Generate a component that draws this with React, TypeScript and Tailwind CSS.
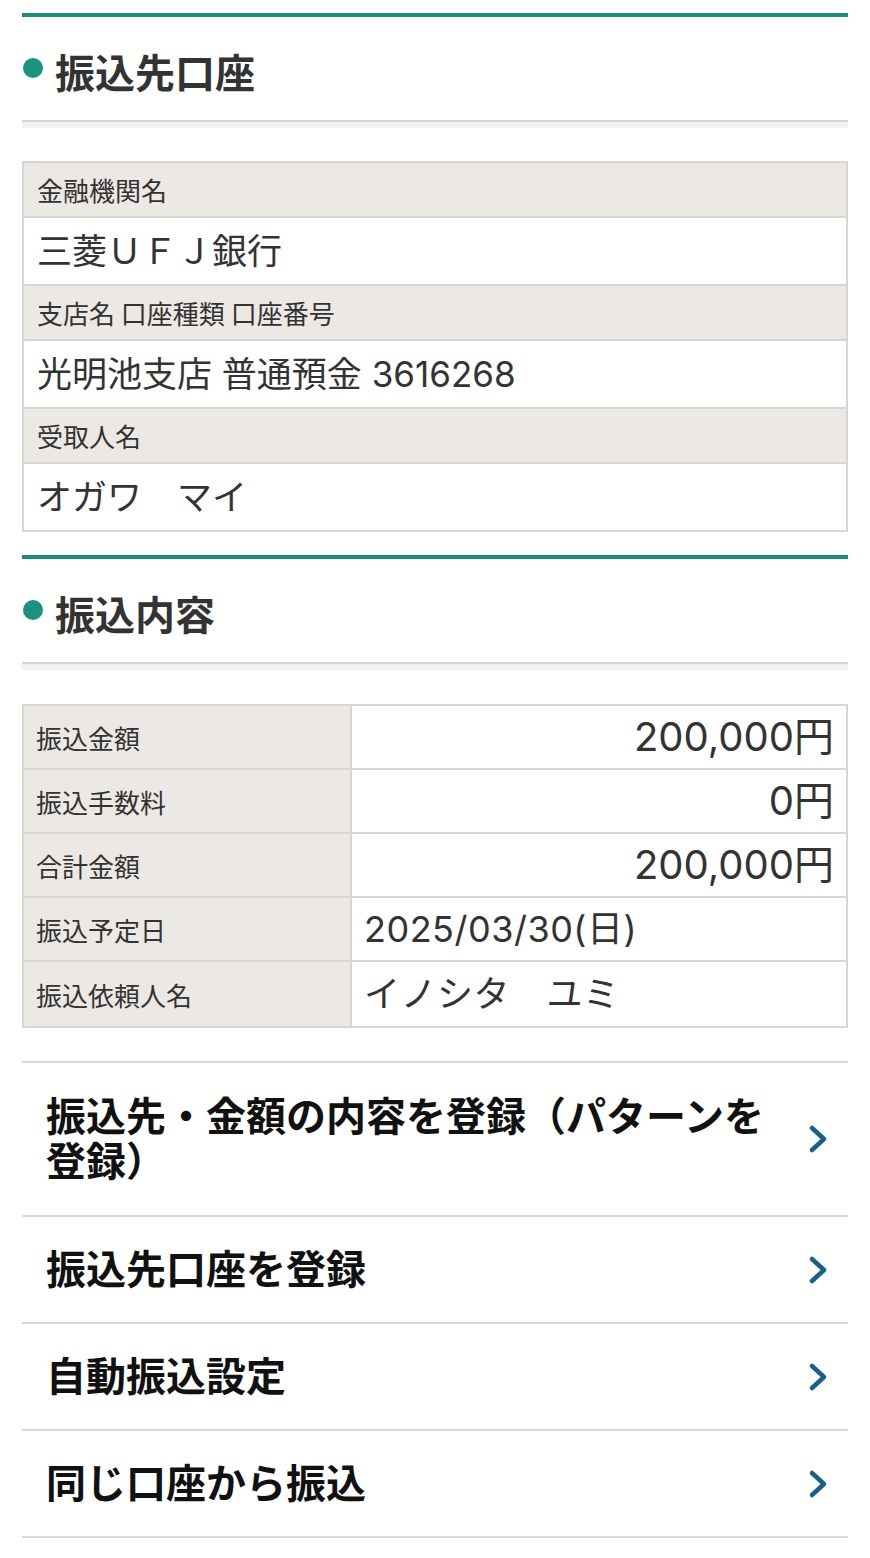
import type { ReactNode } from 'react'

function SectionHeader({ title }: { title: string }) {
  return (
    <div>
      <div className="h-1 bg-[#1b8c78]" />
      <div className="flex h-[103px] items-start pt-[33px]">
        <span className="ml-px mt-[8px] h-5 w-5 shrink-0 rounded-full bg-[#1a927d]" />
        <h2 className="ml-3 text-[40px] font-bold leading-[48px] text-[#333]">{title}</h2>
      </div>
      <div className="h-2 border-t-2 border-[#d4d4d4] bg-[#f2f2f2]" />
    </div>
  )
}

function Chevron() {
  return (
    <svg width="20" height="30" viewBox="0 0 20 30" fill="none" className="shrink-0">
      <path
        d="M4 4 L16 15 L4 26"
        stroke="#1b5f88"
        strokeWidth="4.5"
        strokeLinecap="round"
        strokeLinejoin="round"
      />
    </svg>
  )
}

function MenuItem({ children, tall }: { children: ReactNode; tall?: boolean }) {
  return (
    <a
      className={
        tall
          ? 'flex items-center gap-6 border-t-2 border-[#d9d9d9] py-[31px] pl-6 pr-[20px]'
          : 'flex items-center gap-6 border-t-2 border-[#d9d9d9] py-[30px] pl-6 pr-[20px]'
      }
    >
      <span className="flex-1 text-[40px] font-bold leading-[45px] text-[#111]">{children}</span>
      <Chevron />
    </a>
  )
}

const accountRows = [
  { label: '金融機関名', value: '三菱ＵＦＪ銀行' },
  { label: '支店名 口座種類 口座番号', value: '光明池支店 普通預金 3616268' },
  { label: '受取人名', value: 'オガワ　マイ' },
]

const detailRows: { label: string; value: string; right?: boolean }[] = [
  { label: '振込金額', value: '200,000円', right: true },
  { label: '振込手数料', value: '0円', right: true },
  { label: '合計金額', value: '200,000円', right: true },
  { label: '振込予定日', value: '2025/03/30(日)' },
  { label: '振込依頼人名', value: 'イノシタ　ユミ' },
]

export default function App() {
  return (
    <div className="min-h-[1558px] w-[870px] bg-white px-[22px] pt-[13px] font-['Inter','Noto_Sans_CJK_JP',sans-serif] text-[#333]">
      <SectionHeader title="振込先口座" />

      {/* 振込先口座 */}
      <div className="mt-[33px] divide-y-2 divide-[#d6d6d6] border-2 border-[#d6d6d6]">
        {accountRows.map(row => (
          <div key={row.label} className="divide-y-2 divide-[#d6d6d6]">
            <div className="flex h-[55px] items-center bg-[#ece8e4] px-[13px] text-[26px] font-['Noto_Sans_CJK_JP',sans-serif]">
              {row.label}
            </div>
            <div className="flex h-[66px] items-center px-[13px] text-[35px]">
              {row.value}
            </div>
          </div>
        ))}
      </div>

      <div className="mt-[23px]">
        <SectionHeader title="振込内容" />
      </div>

      {/* 振込内容 */}
      <div className="mt-[34px] divide-y-2 divide-[#d6d6d6] border-2 border-[#d6d6d6]">
        {detailRows.map(row => (
          <div key={row.label} className="flex h-[64px]">
            <div className="flex w-[328px] items-center border-r-2 border-[#d6d6d6] bg-[#ece8e4] px-3 text-[26px] font-['Noto_Sans_CJK_JP',sans-serif]">
              {row.label}
            </div>
            <div
              className={
                row.right
                  ? 'flex flex-1 items-center justify-end px-3 text-[40px]'
                  : 'flex flex-1 items-center px-3 text-[36px] tracking-[0.5px]'
              }
            >
              {row.value}
            </div>
          </div>
        ))}
      </div>

      <div className="mt-[33px] border-b-2 border-[#d9d9d9]">
        <MenuItem tall>振込先・金額の内容を登録（パターンを登録）</MenuItem>
        <MenuItem>振込先口座を登録</MenuItem>
        <MenuItem>自動振込設定</MenuItem>
        <MenuItem>同じ口座から振込</MenuItem>
      </div>
    </div>
  )
}
